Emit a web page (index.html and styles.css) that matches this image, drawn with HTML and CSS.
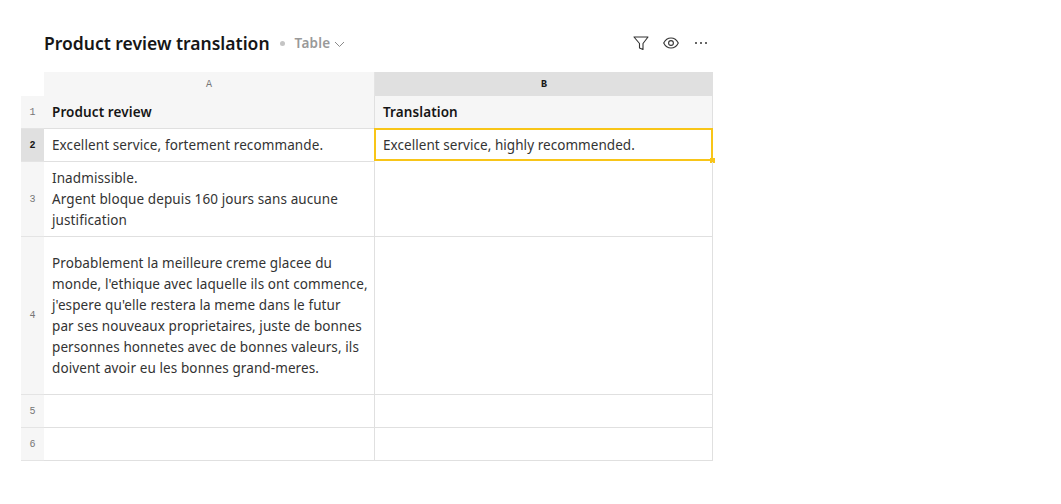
FILE: index.html
```html
<!DOCTYPE html>
<html lang="en">
<head>
<meta charset="utf-8">
<title>Product review translation</title>
<link rel="stylesheet" href="styles.css">
</head>
<body>
<main class="page">
  <header class="toolbar">
    <div class="heading">
      <h1 class="title">Product review translation</h1>
      <span class="dot"></span>
      <span class="view">Table</span>
      <svg class="chev" width="11" height="7" viewBox="0 0 11 7"><path d="M1 1l4.500 4.500L10 1" fill="none" stroke="#8a8a8a" stroke-width="1"/></svg>
    </div>
    <div class="actions">
      <svg width="16" height="15" viewBox="0 0 16 15"><path d="M1 1h14L10 7.500v6L6.500 12V7.500z" fill="none" stroke="#333" stroke-width="1.100" stroke-linejoin="round"/></svg>
      <svg class="eye" width="16" height="12" viewBox="0 0 16 12"><path d="M.7 6C2.300 2.800 4.900 1 8 1s5.700 1.800 7.300 5c-1.600 3.200-4.200 5-7.300 5S2.300 9.200.7 6z" fill="none" stroke="#333" stroke-width="1.100"/><circle cx="8" cy="6" r="2.400" fill="none" stroke="#333" stroke-width="1.100"/></svg>
      <svg width="14" height="4" viewBox="0 0 14 4"><circle cx="2" cy="2" r="1" fill="#333"/><circle cx="7" cy="2" r="1" fill="#333"/><circle cx="12" cy="2" r="1" fill="#333"/></svg>
    </div>
  </header>
  <div class="sheet">
    <div class="corner"></div>
    <div class="col">A</div>
    <div class="col col-active">B</div>

    <div class="num">1</div>
    <div class="cell head">Product review</div>
    <div class="cell head">Translation</div>

    <div class="num num-active">2</div>
    <div class="cell">Excellent service, fortement recommande.</div>
    <div class="cell selected"><span class="sel-text">Excellent service, highly recommended.</span><span class="handle"></span></div>

    <div class="num">3</div>
    <div class="cell"><p class="text">Inadmissible.<br>Argent bloque depuis 160 jours sans aucune<br>justification</p></div>
    <div class="cell"></div>

    <div class="num">4</div>
    <div class="cell"><p class="text">Probablement la meilleure creme glacee du<br>monde, l'ethique avec laquelle ils ont commence,<br>j'espere qu'elle restera la meme dans le futur<br>par ses nouveaux proprietaires, juste de bonnes<br>personnes honnetes avec de bonnes valeurs, ils<br>doivent avoir eu les bonnes grand-meres.</p></div>
    <div class="cell"></div>

    <div class="num">5</div>
    <div class="cell"></div>
    <div class="cell"></div>

    <div class="num">6</div>
    <div class="cell"></div>
    <div class="cell"></div>
  </div>
</main>
</body>
</html>
```
FILE: styles.css
```css
* { box-sizing: border-box; }
html, body { margin: 0; background: #fff; }
body { font-family: "Noto Sans", "Open Sans", sans-serif; color: #222; }
.page { width: 1061px; height: 504px; padding: 29px 0 0 21px; overflow: hidden; }
.toolbar { width: 692px; height: 43px; padding-left: 23px; display: flex; align-items: flex-start; justify-content: space-between; }
.heading { display: flex; align-items: center; height: 28px; }
.title { margin: 0; font-size: 17.500px; font-weight: 600; color: #161616; line-height: 28px; }
.dot { width: 5px; height: 5px; border-radius: 50%; background: #c4c4c4; margin: 0 10px 0 10px; }
.view { font-size: 13.500px; font-weight: 600; letter-spacing: 0.2px; color: #999; }
.chev { margin-left: 4px; margin-top: 2px; }
.actions { display: flex; align-items: center; gap: 14px; height: 28px; padding-right: 5px; }
.actions svg:last-child { margin-left: 1px; }
.sheet { display: grid; grid-template-columns: 23px 331px 338px; grid-template-rows: 24px 33px 33px 75px 158px 33px 33px; }
.corner { background: #fff; }
.col { background: #f6f6f6; border-right: 1px solid #e4e4e4; font: 10px "Liberation Mono", monospace; color: #777; display: flex; align-items: center; justify-content: center; }
.col-active { background: #e0e0e0; color: #161616; font-weight: 700; border-right: 0; }
.num { background: #f6f6f6; border-bottom: 1px solid #e4e4e4; font: 10px "Liberation Mono", monospace; color: #777; display: flex; align-items: center; justify-content: center; }
.num-active { background: #e0e0e0; color: #161616; font-weight: 700; }
.cell { position: relative; display: flex; align-items: center; padding: 0 8px; border-right: 1px solid #e0e0e0; border-bottom: 1px solid #e0e0e0; font-size: 13.500px; letter-spacing: 0.1px; line-height: 21px; color: #333; }
.text { margin: 0; white-space: nowrap; }
.head { background: #f6f6f6; font-weight: 600; color: #161616; }
.selected { margin: -1px 0 1px -1px; padding: 2px 0 0 9px; letter-spacing: 0.05px; outline: 2px solid #f8c518; outline-offset: -2px; border-color: transparent; }
.handle { position: absolute; right: -3px; bottom: -3px; width: 5px; height: 5px; background: #f8c518; }
```
